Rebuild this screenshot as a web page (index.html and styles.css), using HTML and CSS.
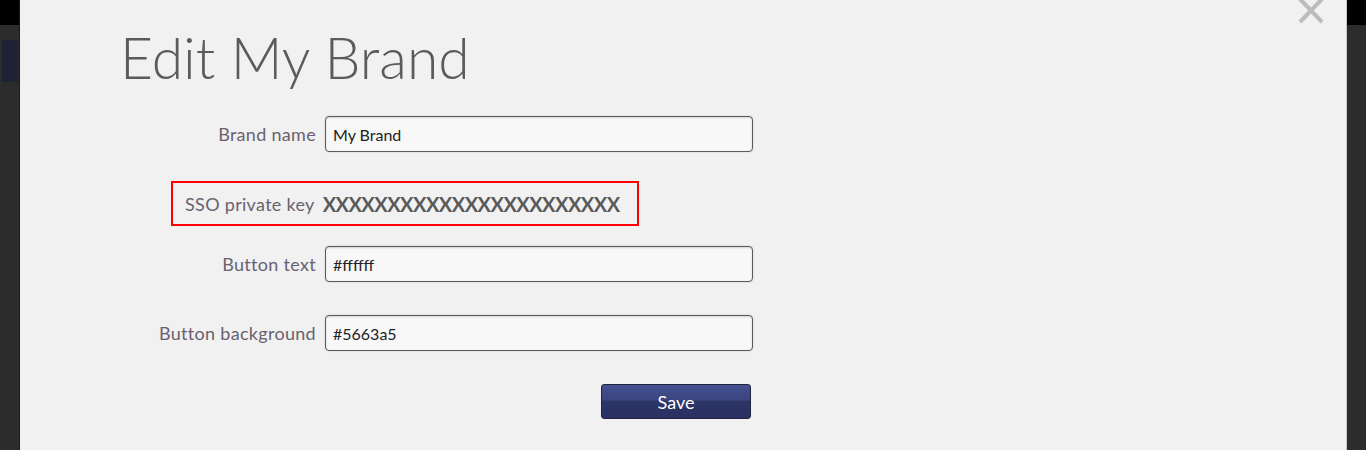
FILE: index.html
```html
<!DOCTYPE html>
<html lang="en">
<head>
  <meta charset="UTF-8">
  <title>Edit My Brand</title>
  <link rel="stylesheet" href="styles.css">
</head>
<body>

<div class="topbar"></div>
<div class="page">
  <div class="nav-item"></div>
</div>

<div class="modal">
  <a class="close" href="#">
    <svg width="28" height="28" viewBox="0 0 28 28">
      <path d="M3 1 L25 24 M25 1 L3 24" stroke="#bcbcbc" stroke-width="4" fill="none"/>
    </svg>
  </a>

  <h1>Edit My Brand</h1>

  <form class="brand-form">
    <div class="row">
      <label>Brand name</label>
      <input type="text" value="My Brand">
    </div>

    <div class="row key">
      <label>SSO private key</label>
      <span class="key-value">XXXXXXXXXXXXXXXXXXXXXXX</span>
    </div>

    <div class="row">
      <label>Button text</label>
      <input type="text" value="#ffffff">
    </div>

    <div class="row">
      <label>Button background</label>
      <input type="text" value="#5663a5">
    </div>

    <div class="actions">
      <button type="button">Save</button>
    </div>
  </form>
</div>

</body>
</html>
```

FILE: styles.css
```css
* { margin: 0; padding: 0; box-sizing: border-box; }

body {
  font-family: 'Lato', 'Open Sans', sans-serif;
  background: #2c2c2c;
  height: 450px;
  overflow: hidden;
  color: #666;
}

/* Page behind the modal */
.topbar {
  height: 25px;
  background: #000;
}

.page {
  padding: 15px 0 0 2px;
}

.nav-item {
  width: 16px;
  height: 42px;
  background: #1d2234;
}

/* Modal */
.modal {
  position: absolute;
  left: 19px;
  top: 0;
  width: 1328px;
  height: 470px;
  background: #f1f1f1;
  border-left: 1px solid #1a1a1a;
  border-right: 1px solid #c8c8c8;
  padding: 21px 0 0 100px;
}

.close {
  position: absolute;
  top: -2px;
  right: 21px;
  display: block;
  line-height: 0;
}

h1 {
  font-size: 57px;
  font-weight: 300;
  color: #5b5b5b;
  line-height: 72px;
}

/* Form */
.brand-form {
  margin-top: 23px;
}

.row {
  display: flex;
  align-items: center;
  margin-bottom: 33px;
}

.row label {
  width: 196px;
  margin-right: 9px;
  text-align: right;
  font-size: 18px;
  letter-spacing: 0.3px;
  color: #6a6170;
}

.row input {
  width: 428px;
  height: 36px;
  padding: 0 7px;
  border: 1px solid #5a5a5a;
  border-radius: 4px;
  background: #f8f8f8;
  box-shadow: inset 0 1px 2px rgba(0, 0, 0, 0.15), 0 0 2px rgba(0, 0, 0, 0.15);
  font-family: inherit;
  font-size: 16px;
  color: #222;
}

.row:first-child {
  margin-bottom: 29px;
}

/* Highlighted key row */
.row.key {
  display: inline-flex;
  height: 45px;
  margin-left: 51px;
  margin-bottom: 20px;
  padding: 0 17px 0 12px;
  border: 2px solid #f00;
}

.row.key label {
  width: auto;
  margin-right: 8px;
}

.key-value {
  font-size: 20px;
  font-weight: 700;
  letter-spacing: -0.5px;
  color: #5a5a5a;
}

.actions {
  padding-left: 481px;
}

.actions button {
  width: 150px;
  height: 35px;
  border: 1px solid #1f2340;
  border-radius: 3px;
  background: linear-gradient(to bottom, #44508f 0%, #3a4580 45%, #2d3567 50%, #2a3162 100%);
  color: #fff;
  font-family: inherit;
  font-size: 18px;
  cursor: pointer;
}
```
